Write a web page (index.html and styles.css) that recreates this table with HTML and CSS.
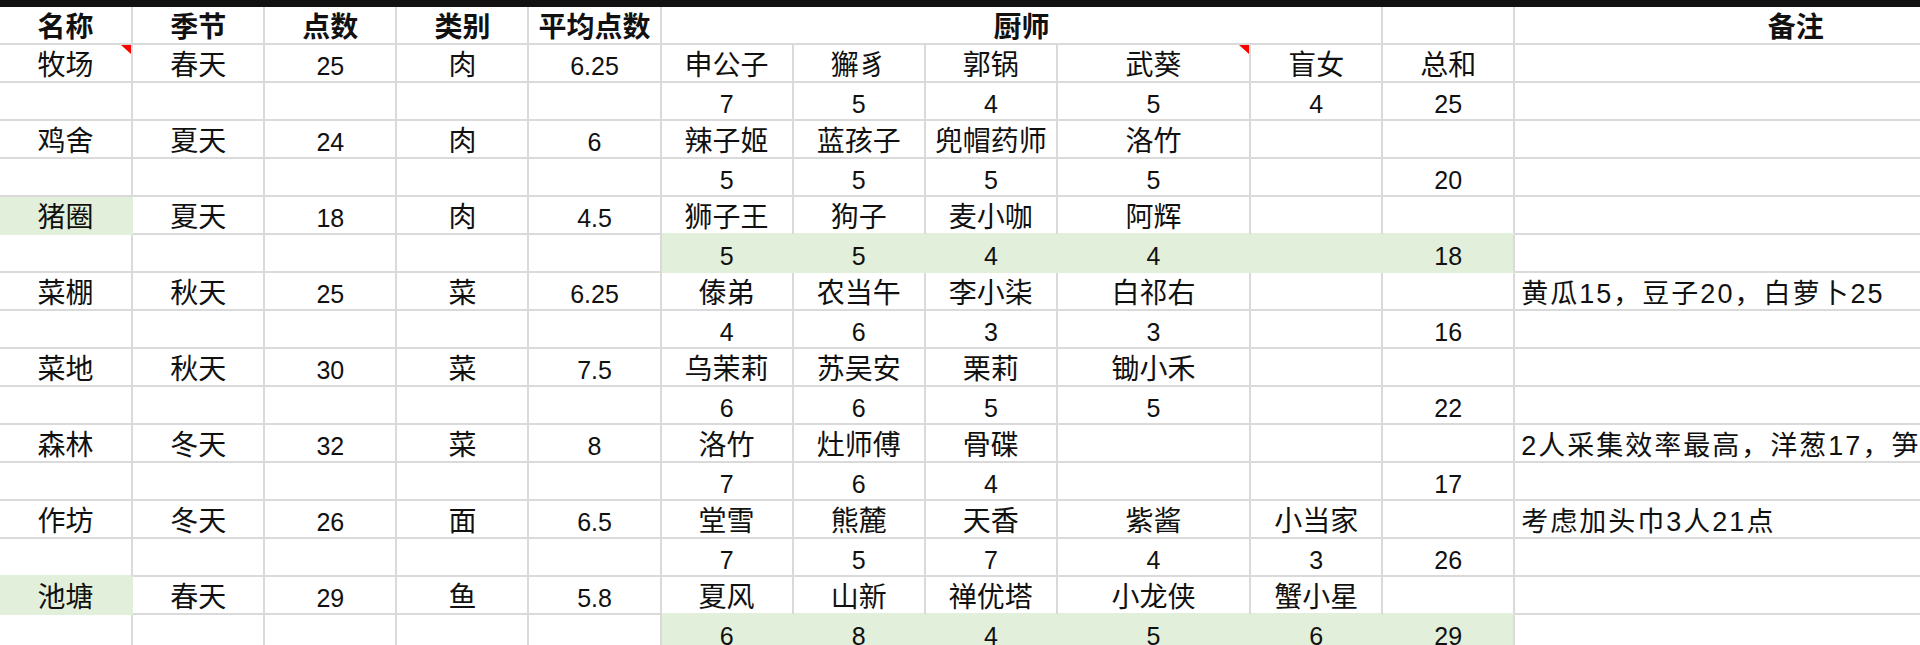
FILE: index.html
```html
<!DOCTYPE html>
<html lang="zh-CN">
<head>
<meta charset="utf-8">
<title>厨师安排</title>
<link rel="stylesheet" href="styles.css">
</head>
<body>
<div class="topbar"></div>
<table class="sheet">
  <colgroup>
    <col class="c-a"><col class="c-n"><col class="c-n"><col class="c-n"><col class="c-n">
    <col class="c-n"><col class="c-n"><col class="c-n"><col class="c-i"><col class="c-n"><col class="c-n"><col class="c-l">
  </colgroup>
  <tr class="head">
    <td>名称</td><td>季节</td><td>点数</td><td>类别</td><td>平均点数</td>
    <td colspan="5">厨师</td><td></td><td>备注</td>
  </tr>
  <tr>
    <td class="note">牧场<span class="flag"></span></td><td>春天</td><td class="n">25</td><td>肉</td><td class="n">6.25</td>
    <td>申公子</td><td>獬豸</td><td>郭锅</td><td class="note">武葵<span class="flag"></span></td><td>盲女</td><td>总和</td><td class="rem"></td>
  </tr>
  <tr class="nums">
    <td></td><td></td><td></td><td></td><td></td>
    <td>7</td><td>5</td><td>4</td><td>5</td><td>4</td><td>25</td><td class="rem"></td>
  </tr>
  <tr>
    <td>鸡舍</td><td>夏天</td><td class="n">24</td><td>肉</td><td class="n">6</td>
    <td>辣子姬</td><td>蓝孩子</td><td>兜帽药师</td><td>洛竹</td><td></td><td></td><td class="rem"></td>
  </tr>
  <tr class="nums">
    <td></td><td></td><td></td><td></td><td></td>
    <td>5</td><td>5</td><td>5</td><td>5</td><td></td><td>20</td><td class="rem"></td>
  </tr>
  <tr>
    <td class="green">猪圈</td><td>夏天</td><td class="n">18</td><td>肉</td><td class="n">4.5</td>
    <td class="gb">狮子王</td><td class="gb">狗子</td><td class="gb">麦小咖</td><td class="gb">阿辉</td><td class="gb"></td><td class="gb"></td><td class="rem"></td>
  </tr>
  <tr class="nums">
    <td></td><td></td><td></td><td></td><td></td>
    <td class="green">5</td><td class="green">5</td><td class="green">4</td><td class="green">4</td><td class="green"></td><td class="green last">18</td><td class="rem"></td>
  </tr>
  <tr>
    <td>菜棚</td><td>秋天</td><td class="n">25</td><td>菜</td><td class="n">6.25</td>
    <td>傣弟</td><td>农当午</td><td>李小柒</td><td>白祁右</td><td></td><td></td><td class="rem">黄瓜15，豆子20，白萝卜25</td>
  </tr>
  <tr class="nums">
    <td></td><td></td><td></td><td></td><td></td>
    <td>4</td><td>6</td><td>3</td><td>3</td><td></td><td>16</td><td class="rem"></td>
  </tr>
  <tr>
    <td>菜地</td><td>秋天</td><td class="n">30</td><td>菜</td><td class="n">7.5</td>
    <td>乌茉莉</td><td>苏吴安</td><td>栗莉</td><td>锄小禾</td><td></td><td></td><td class="rem"></td>
  </tr>
  <tr class="nums">
    <td></td><td></td><td></td><td></td><td></td>
    <td>6</td><td>6</td><td>5</td><td>5</td><td></td><td>22</td><td class="rem"></td>
  </tr>
  <tr>
    <td>森林</td><td>冬天</td><td class="n">32</td><td>菜</td><td class="n">8</td>
    <td>洛竹</td><td>灶师傅</td><td>骨碟</td><td></td><td></td><td></td><td class="rem">2人采集效率最高，洋葱17，笋</td>
  </tr>
  <tr class="nums">
    <td></td><td></td><td></td><td></td><td></td>
    <td>7</td><td>6</td><td>4</td><td></td><td></td><td>17</td><td class="rem"></td>
  </tr>
  <tr>
    <td>作坊</td><td>冬天</td><td class="n">26</td><td>面</td><td class="n">6.5</td>
    <td>堂雪</td><td>熊麓</td><td>天香</td><td>紫酱</td><td>小当家</td><td></td><td class="rem">考虑加头巾3人21点</td>
  </tr>
  <tr class="nums">
    <td class="gb"></td><td></td><td></td><td></td><td></td>
    <td>7</td><td>5</td><td>7</td><td>4</td><td>3</td><td>26</td><td class="rem"></td>
  </tr>
  <tr>
    <td class="green">池塘</td><td>春天</td><td class="n">29</td><td>鱼</td><td class="n">5.8</td>
    <td class="gb">夏风</td><td class="gb">山新</td><td class="gb">禅优塔</td><td class="gb">小龙侠</td><td class="gb">蟹小星</td><td class="gb"></td><td class="rem"></td>
  </tr>
  <tr class="nums">
    <td></td><td></td><td></td><td></td><td></td>
    <td class="green">6</td><td class="green">8</td><td class="green">4</td><td class="green">5</td><td class="green">6</td><td class="green last">29</td><td class="rem"></td>
  </tr>
</table>
</body>
</html>
```
FILE: styles.css
```css
html, body {
  margin: 0;
  padding: 0;
  background: #ffffff;
  overflow: hidden;
  width: 1920px;
  height: 645px;
}

.topbar {
  height: 7px;
  background: #111111;
}

.sheet {
  border-collapse: separate;
  border-spacing: 0;
  table-layout: fixed;
  width: 2078px;
  font-family: "Liberation Sans", "Noto Sans CJK SC", sans-serif;
  font-size: 28px;
  color: #111111;
}

.c-a { width: 133px; }
.c-n { width: 132px; }
.c-i { width: 193px; }
.c-l { width: 562px; }

.sheet td {
  height: 36px;
  padding: 0;
  border-right: 2px solid #dadada;
  border-bottom: 2px solid #dadada;
  text-align: center;
  vertical-align: bottom;
  line-height: 30px;
  white-space: nowrap;
  overflow: hidden;
  position: relative;
}

.sheet .nums td,
.sheet td.n {
  font-size: 25px;
  line-height: 29px;
}

.sheet .head td {
  font-weight: bold;
}

.sheet td.rem {
  text-align: left;
  padding-left: 6px;
  font-size: 27px;
  letter-spacing: 2px;
  overflow: visible;
}

.sheet td.green {
  background: #e2efda;
  border-right-color: #e2efda;
  border-bottom-color: #e2efda;
}

.sheet td.green.last {
  border-right-color: #dadada;
}

.sheet td.gb {
  border-bottom-color: #e2efda;
}

.flag {
  position: absolute;
  top: 0;
  right: 0;
  width: 0;
  height: 0;
  border-top: 9px solid #ff0000;
  border-left: 10px solid transparent;
}
```
